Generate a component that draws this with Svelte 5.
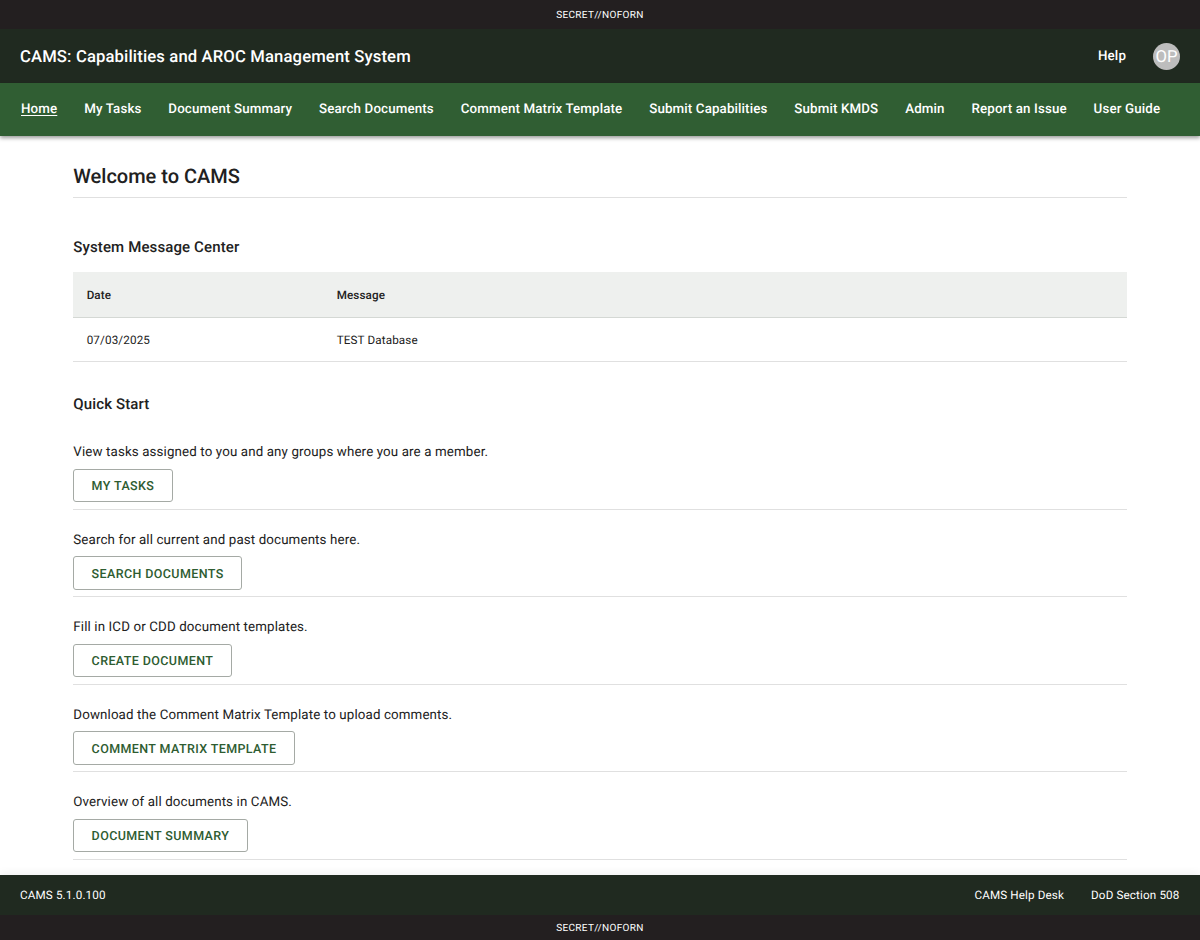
<script>
  const classification = 'SECRET//NOFORN'

  const links = [
    'Home',
    'My Tasks',
    'Document Summary',
    'Search Documents',
    'Comment Matrix Template',
    'Submit Capabilities',
    'Submit KMDS',
    'Admin',
    'Report an Issue',
    'User Guide'
  ]

  const messages = [{ date: '07/03/2025', text: 'TEST Database' }]

  const actions = [
    { text: 'View tasks assigned to you and any groups where you are a member.', button: 'My Tasks' },
    { text: 'Search for all current and past documents here.', button: 'Search Documents' },
    { text: 'Fill in ICD or CDD document templates.', button: 'Create Document' },
    { text: 'Download the Comment Matrix Template to upload comments.', button: 'Comment Matrix Template' },
    { text: 'Overview of all documents in CAMS.', button: 'Document Summary' }
  ]

  let current = $state('Home')
</script>

<div class="page">
  <div class="banner top">{classification}</div>
  <header>
    <div class="brand">CAMS: Capabilities and AROC Management System</div>
    <div class="user">
      <span class="help">Help</span>
      <span class="avatar">OP</span>
    </div>
  </header>
  <nav>
    {#each links as link}
      <button class="link" class:active={link === current} onclick={() => { current = link }}>{link}</button>
    {/each}
  </nav>

  <main>
    <h1>Welcome to CAMS</h1>

    <h2>System Message Center</h2>
    <table>
      <thead>
        <tr><th class="date">Date</th><th>Message</th></tr>
      </thead>
      <tbody>
        {#each messages as message}
          <tr><td>{message.date}</td><td>{message.text}</td></tr>
        {/each}
      </tbody>
    </table>

    <h2 class="quick">Quick Start</h2>
    {#each actions as action}
      <section>
        <p>{action.text}</p>
        <button class="outlined">{action.button}</button>
      </section>
    {/each}
  </main>

  <footer>
    <span>CAMS 5.1.0.100</span>
    <div class="footer-links">
      <span>CAMS Help Desk</span>
      <span>DoD Section 508</span>
    </div>
  </footer>
  <div class="banner bottom">{classification}</div>
</div>

<style>
  :global(body) {
    margin: 0;
  }
  .page {
    display: flex;
    flex-direction: column;
    height: 940px;
    overflow: hidden;
    box-sizing: border-box;
    background-color: #fff;
    color: #212121;
    font-family: Roboto, sans-serif;
    text-rendering: geometricPrecision;
  }
  .banner {
    flex: none;
    box-sizing: border-box;
    background-color: #231f20;
    color: #fff;
    font-size: 10px;
    letter-spacing: 0.33px;
    text-align: center;
  }
  .top {
    height: 29px;
    padding-top: 2px;
    line-height: 27px;
  }
  .bottom {
    height: 25px;
    padding-top: 2px;
    line-height: 23px;
  }
  header {
    display: flex;
    flex: none;
    align-items: center;
    justify-content: space-between;
    height: 54px;
    box-sizing: border-box;
    padding: 0 20px;
    background-color: #202a20;
    color: #fff;
  }
  .brand {
    padding-top: 3px;
    font-size: 16.67px;
    font-weight: 500;
    letter-spacing: 0.13px;
  }
  .user {
    display: flex;
    align-items: center;
    gap: 27px;
  }
  .help {
    padding-top: 1px;
    font-size: 13.33px;
    font-weight: 500;
    letter-spacing: 0.125px;
  }
  .avatar {
    width: 27px;
    height: 27px;
    border-radius: 50%;
    background-color: #bdbdbd;
    font-size: 16.67px;
    line-height: 29px;
    text-align: center;
  }
  nav {
    display: flex;
    flex: none;
    align-items: center;
    gap: 26.9px;
    height: 53px;
    box-sizing: border-box;
    padding: 0 21px;
    background-color: #305e33;
    box-shadow: 0 2px 4px rgba(0, 0, 0, 0.4);
  }
  .link {
    padding: 0;
    border: 0;
    background: none;
    color: #fff;
    font: 500 13.33px Roboto, sans-serif;
    letter-spacing: 0.125px;
    text-rendering: inherit;
    white-space: nowrap;
    cursor: pointer;
  }
  .active {
    text-decoration: underline;
    text-underline-offset: 2px;
  }
  main {
    flex: 1;
    min-height: 0;
    padding: 27px 73.5px 0 73.3px;
  }
  h1 {
    height: 35px;
    box-sizing: border-box;
    margin: 0 0 37px;
    border-bottom: 1px solid #e0e0e0;
    font-size: 20px;
    font-weight: 500;
    line-height: 27px;
    letter-spacing: 0;
  }
  h2 {
    margin: 0;
    font-size: 15px;
    font-weight: 500;
    line-height: 24px;
    letter-spacing: 0.125px;
  }
  table {
    width: 100%;
    margin-top: 13px;
    border-collapse: separate;
    border-spacing: 0;
    font-size: 11.67px;
    text-align: left;
    letter-spacing: 0.14px;
  }
  th,
  td {
    box-sizing: border-box;
    padding: 0 13.33px;
    border-bottom: 1px solid #e0e0e0;
  }
  th {
    height: 46px;
    border-color: #d4d8d4;
    background-color: #eef0ee;
    font-weight: 500;
  }
  td {
    height: 44px;
  }
  .date {
    width: 250px;
  }
  .quick {
    margin: 30px 0 6.3px;
  }
  section {
    height: 87.5px;
    box-sizing: border-box;
    padding-top: 20px;
    border-bottom: 1px solid #e0e0e0;
  }
  p {
    margin: 0 0 4.7px;
    font-size: 13.33px;
    line-height: 22px;
    letter-spacing: 0.125px;
  }
  .outlined {
    display: block;
    height: 33.4px;
    padding: 2px 17.3px 0;
    border: 1px solid #a5aaa5;
    border-radius: 3px;
    background-color: #fff;
    color: #2e5c31;
    font: 500 12.5px Roboto, sans-serif;
    letter-spacing: 0.39px;
    text-rendering: inherit;
    text-transform: uppercase;
    cursor: pointer;
  }
  footer {
    display: flex;
    flex: none;
    align-items: center;
    justify-content: space-between;
    height: 40px;
    box-sizing: border-box;
    padding: 0 20.5px 0 20px;
    background-color: #202a20;
    box-shadow: 0 -2px 8px rgba(0, 0, 0, 0.06);
    color: #fff;
    font-size: 11.67px;
    letter-spacing: 0.14px;
  }
  .footer-links {
    display: flex;
    gap: 27px;
  }
</style>
